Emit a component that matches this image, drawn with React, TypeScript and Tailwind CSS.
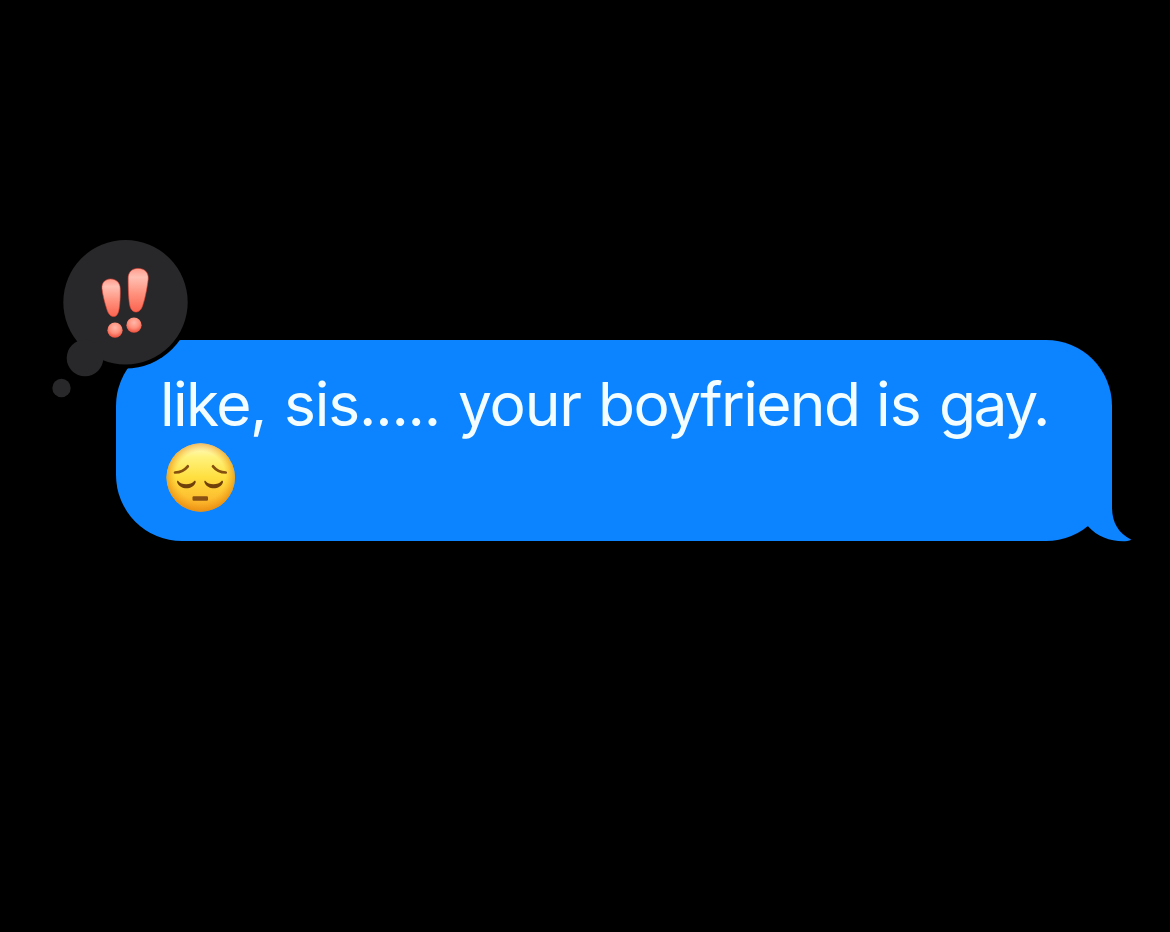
const words = [
  { text: "like,", className: "w-[124px] tracking-[-1.6px]" },
  { text: "sis.....", className: "w-[174px] tracking-[-1.2px]" },
  { text: "your", className: "w-[140px] tracking-[-1.2px]" },
  { text: "boyfriend", className: "w-[278px] tracking-[-1.6px]" },
  { text: "is", className: "w-[63px] tracking-[-0.8px]" },
  { text: "gay.", className: "w-[112px] tracking-[-2.5px]" },
];

function PensiveFace() {
  return (
    <svg className="block h-[74px] w-[74px]" viewBox="0 0 74 74" role="img" aria-label="pensive face">
      <defs>
        <linearGradient id="face" x1="0" y1="0" x2="0" y2="1">
          <stop offset="0" stopColor="#fffbd0" />
          <stop offset="0.2" stopColor="#fff27c" />
          <stop offset="0.5" stopColor="#ffdf40" />
          <stop offset="0.8" stopColor="#fdbf30" />
          <stop offset="1" stopColor="#f7a423" />
        </linearGradient>
        <radialGradient id="rim" cx="0.5" cy="0.48" r="0.53">
          <stop offset="0.68" stopColor="#f5a11d" stopOpacity="0" />
          <stop offset="1" stopColor="#e5870c" stopOpacity="0.85" />
        </radialGradient>
      </defs>
      <circle cx="36.7" cy="36.5" r="34.2" fill="url(#face)" />
      <circle cx="36.7" cy="36.5" r="34.2" fill="url(#rim)" />
      <g fill="none" stroke="#85500f" strokeWidth="2.7" strokeLinecap="round">
        <path d="M11 31.500C16.500 31.300 21 28.800 23.800 25.300" />
        <path d="M61.800 31.500C56.300 31.300 51.800 28.800 49 25.300" />
      </g>
      <g fill="#70400b">
        <path d="M14.400 40.200c2.600 3.900 12.900 3.900 15.600 0 .9-1 2-.2 1.700 1-2.800 8.100-15.600 8.100-18.600 0-.4-1.200.5-2 1.300-1z" />
        <path d="M41.700 40.200c2.600 3.900 12.900 3.900 15.600 0 .9-1 2-.2 1.700 1-2.800 8.100-15.600 8.100-18.600 0-.4-1.200.5-2 1.300-1z" />
        <rect x="28.500" y="55.300" width="15.500" height="4.400" rx="1.200" fill="#8a5013" />
      </g>
    </svg>
  );
}

// Thought-bubble reaction that hangs over the top left corner
function Reaction() {
  return (
    <svg
      className="absolute -left-[66px] -top-[105px] h-[170px] w-[146px]"
      viewBox="50 235 146 170"
      role="img"
      aria-label="emphasized"
    >
      <defs>
        <linearGradient id="mark" x1="0" y1="0" x2="0" y2="1">
          <stop offset="0" stopColor="#ff9c8c" />
          <stop offset="0.2" stopColor="#ffc0b3" />
          <stop offset="0.6" stopColor="#ff8f7b" />
          <stop offset="1" stopColor="#fa6450" />
        </linearGradient>
        <radialGradient id="dot" cx="0.5" cy="0.33" r="0.67">
          <stop offset="0" stopColor="#ffb8aa" />
          <stop offset="0.55" stopColor="#ff8f7b" />
          <stop offset="1" stopColor="#ec4d3b" />
        </radialGradient>
      </defs>
      <circle cx="125.5" cy="302.3" r="66.2" fill="#000" />
      <g fill="#28282a">
        <circle cx="125.5" cy="302.3" r="62.2" />
        <circle cx="85" cy="358" r="18.3" />
        <circle cx="61.5" cy="388" r="9.2" />
      </g>
      <g fill="url(#mark)" stroke="#e84535" strokeOpacity="0.65" strokeWidth="0.9">
        <path d="M102 288.500C101.500 282.500 105.500 279 110.500 279C116 279 120 282.500 120.200 288.500C120.400 296 120 305 118.800 310.500C117.800 314.800 116 316.600 113.700 316.600C111.200 316.600 108.800 314.800 107.300 310.500C104.900 303.500 102.700 295 102 288.500Z" />
        <path d="M128.200 278.500C128.100 272.300 131.800 268.400 138 268.400C144.500 268.400 148.800 272.400 148.200 279C147.200 288 144.900 299 142.700 305.500C141.200 310 138.800 312 136 312C133.200 312 130.800 310 129.800 305.500C128.500 299 128.200 288 128.200 278.500Z" />
      </g>
      <circle cx="115" cy="330.2" r="7.6" fill="url(#dot)" />
      <circle cx="134" cy="325.2" r="7.6" fill="url(#dot)" />
    </svg>
  );
}

export default function App() {
  return (
    <main className="h-[932px] w-[1170px] overflow-hidden bg-black pl-[116px] pt-[340px]">
      <div className="relative h-[201px] w-[996px] rounded-[66px] bg-[#0d84ff] pl-[44px] pt-[28px]">
        <p className="flex h-[73px] whitespace-nowrap font-[Inter,sans-serif] text-[60.5px] leading-[73px] text-[#f3fdff]">
          {words.map((word) => (
            <span key={word.text} className={word.className}>
              {word.text}
            </span>
          ))}
        </p>
        <div className="ml-1 w-[74px]">
          <PensiveFace />
        </div>
        <svg className="absolute -bottom-px left-[960px] h-[82px] w-[60px]" viewBox="1076 460 60 82">
          <path
            d="M1088 475H1112V507C1112 522 1118 533 1131.300 539.800C1129 541.200 1126 541.200 1123 541.200C1110 541.200 1097 536.500 1088 526.300Z"
            fill="#0d84ff"
          />
        </svg>
        <Reaction />
      </div>
    </main>
  );
}
